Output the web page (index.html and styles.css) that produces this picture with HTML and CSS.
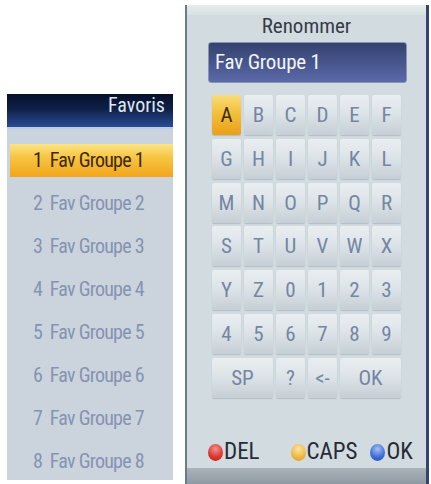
FILE: index.html
```html
<!DOCTYPE html>
<html>
<head>
<meta charset="utf-8">
<link rel="stylesheet" href="styles.css">
</head>
<body>
<div class="screen">
  <div class="fav">
    <div class="fav-head">Favoris</div>
    <ul class="fav-list">
      <li class="row sel">1&nbsp; Fav Groupe 1</li>
      <li class="row">2&nbsp; Fav Groupe 2</li>
      <li class="row">3&nbsp; Fav Groupe 3</li>
      <li class="row">4&nbsp; Fav Groupe 4</li>
      <li class="row">5&nbsp; Fav Groupe 5</li>
      <li class="row">6&nbsp; Fav Groupe 6</li>
      <li class="row">7&nbsp; Fav Groupe 7</li>
      <li class="row">8&nbsp; Fav Groupe 8</li>
    </ul>
  </div>
  <div class="dlg">
    <div class="dlg-top"></div>
    <div class="dlg-title">Renommer</div>
    <div class="field">Fav Groupe 1</div>
    <div class="keys">
      <div class="key on">A</div><div class="key">B</div><div class="key">C</div><div class="key">D</div><div class="key">E</div><div class="key">F</div>
      <div class="key">G</div><div class="key">H</div><div class="key">I</div><div class="key">J</div><div class="key">K</div><div class="key">L</div>
      <div class="key">M</div><div class="key">N</div><div class="key">O</div><div class="key">P</div><div class="key">Q</div><div class="key">R</div>
      <div class="key">S</div><div class="key">T</div><div class="key">U</div><div class="key">V</div><div class="key">W</div><div class="key">X</div>
      <div class="key">Y</div><div class="key">Z</div><div class="key">0</div><div class="key">1</div><div class="key">2</div><div class="key">3</div>
      <div class="key">4</div><div class="key">5</div><div class="key">6</div><div class="key">7</div><div class="key">8</div><div class="key">9</div>
      <div class="key wide">SP</div><div class="key">?</div><div class="key">&lt;-</div><div class="key wide">OK</div>
    </div>
    <div class="legend">
      <span class="leg"><span class="dot red"></span>DEL</span>
      <span class="leg caps"><span class="dot yellow"></span>CAPS</span>
      <span class="leg ok"><span class="dot blue"></span>OK</span>
    </div>
    <div class="dlg-bottom"></div>
  </div>
</div>
</body>
</html>
```
FILE: styles.css
```css
html, body {
  margin: 0;
  padding: 0;
  background: #ffffff;
}
body {
  width: 431px;
  height: 484px;
  overflow: hidden;
  font-family: "Roboto Condensed", "Arial Narrow", Roboto, "Liberation Sans", sans-serif;
  font-stretch: 75%;
}
.screen {
  display: flex;
  align-items: flex-start;
  height: 484px;
}

/* ---------- Favoris list ---------- */
.fav {
  margin-left: 7px;
  margin-top: 94px;
  width: 166px;
  height: 386px;
  display: flex;
  flex-direction: column;
  background: #cbd3dd;
}
.fav-head {
  height: 35px;
  box-sizing: border-box;
  padding-right: 8px;
  text-align: right;
  font-size: 20px;
  line-height: 22px;
  color: #dfe6ee;
  background: linear-gradient(#06102a 0%, #0e1f48 45%, #2a4c94 100%);
  border-bottom: 2px solid #b9cde8;
}
.fav-list {
  list-style: none;
  margin: 0;
  padding: 15px 0 0 0;
  display: flex;
  flex-direction: column;
  gap: 10px;
}
.row {
  height: 33px;
  line-height: 33px;
  padding-left: 26px;
  font-size: 20px;
  letter-spacing: -0.75px;
  color: #8593b3;
}
.row.sel {
  margin-left: 3px;
  padding-left: 23px;
  color: #3d2a06;
  background: linear-gradient(#fce485 0%, #f7c542 40%, #f1a51c 100%);
}

/* ---------- Rename dialog ---------- */
.dlg {
  margin-left: 12px;
  margin-top: 5px;
  width: 239px;
  height: 479px;
  display: flex;
  flex-direction: column;
  background: #d2dbdf;
  border-left: 2px solid #6b7a8e;
  border-right: 3px solid #34446c;
}
.dlg-top {
  height: 10px;
  background: linear-gradient(#e4ecea, #d8e1e2);
}
.dlg-title {
  height: 22px;
  line-height: 22px;
  text-align: center;
  font-size: 21px;
  color: #353c48;
}
.field {
  margin: 5px 0 0 21px;
  width: 199px;
  height: 41px;
  box-sizing: border-box;
  padding-left: 6px;
  line-height: 39px;
  font-size: 21px;
  letter-spacing: -0.2px;
  color: #f2f4fa;
  border: 1px solid #8894b4;
  border-radius: 3px;
  background: linear-gradient(#354270 0%, #47558c 50%, #5a6aa8 100%);
}
.keys {
  margin: 12px 0 0 25px;
  display: grid;
  grid-template-columns: repeat(6, 29px);
  grid-auto-rows: 40px;
  column-gap: 3px;
  row-gap: 3.8px;
}
.key {
  display: flex;
  align-items: center;
  justify-content: center;
  font-size: 21px;
  color: #7585a4;
  border-radius: 2px;
  background: linear-gradient(#e9eef0 0%, #dde4e8 45%, #c6cfd6 100%);
  box-shadow: 0 1px 1px rgba(120, 135, 150, 0.35);
}
.key.wide {
  grid-column: span 2;
}
.key.on {
  color: #3a2e06;
  background: linear-gradient(#f9dc78 0%, #f3bf3c 45%, #e9a01a 100%);
}
.legend {
  margin: 42px 0 0 21px;
  height: 24px;
  line-height: 24px;
  display: flex;
  font-size: 23px;
  color: #262b36;
}
.leg {
  display: flex;
  align-items: center;
}
.leg.caps {
  margin-left: 31px;
}
.leg.ok {
  margin-left: 13px;
}
.dot {
  width: 15px;
  height: 17px;
  border-radius: 50%;
  margin-right: 1px;
  margin-top: 2px;
}
.dot.red {
  background: radial-gradient(circle at 50% 30%, #f09090 0%, #dc3a30 55%, #b81c18 100%);
}
.dot.yellow {
  background: radial-gradient(circle at 50% 30%, #fbe4a0 0%, #efbb46 55%, #d89a20 100%);
}
.dot.blue {
  background: radial-gradient(circle at 50% 30%, #a8c0f0 0%, #4070d8 55%, #2048b0 100%);
}
.dlg-bottom {
  margin-top: auto;
  height: 16px;
  background: linear-gradient(#aab3ba, #8f99a2);
}
```
